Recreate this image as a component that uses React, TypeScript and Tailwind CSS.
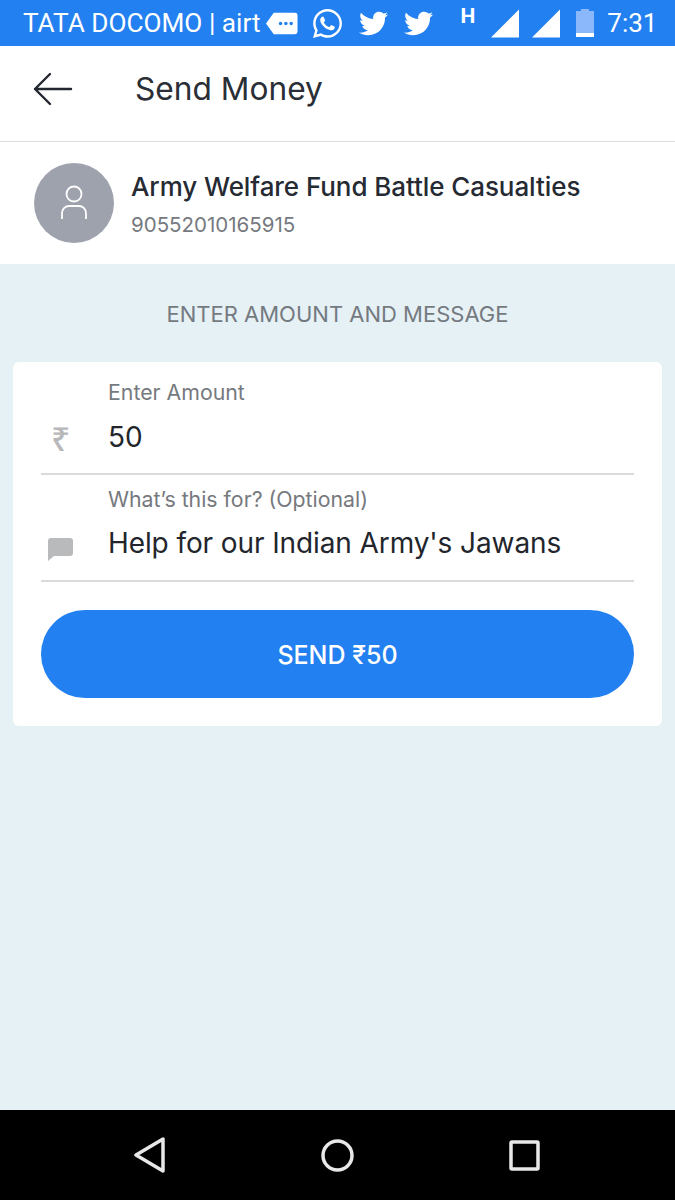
import { FaTwitter, FaWhatsapp } from "react-icons/fa";

const StatusBar = () => {
  return (
    <div className="h-[46px] bg-[#2380f1] flex items-center pl-[23px] text-white font-['Roboto',sans-serif] overflow-hidden">
      <span className="text-[26.200px] leading-none font-normal whitespace-nowrap">TATA DOCOMO | airt</span>
      {/* message bubble */}
      <svg className="ml-[6px] shrink-0" width="32" height="25" viewBox="0 0 33 24">
        <path d="M8 1h22a2.500 2.500 0 0 1 2.500 2.500v17a2.500 2.500 0 0 1-2.500 2.500H8L0 12z" fill="#fff" />
        <circle cx="15" cy="12" r="1.800" fill="#2380f1" />
        <circle cx="20.500" cy="12" r="1.800" fill="#2380f1" />
        <circle cx="26" cy="12" r="1.800" fill="#2380f1" />
      </svg>
      <FaWhatsapp className="ml-[13px] shrink-0" size={33} />
      <FaTwitter className="ml-[15px] shrink-0" size={29} />
      <FaTwitter className="ml-[16px] shrink-0" size={29} />
      <span className="ml-[27px] mb-[14px] text-[21px] leading-none font-bold">H</span>
      <svg className="ml-[16px] mt-[1px] shrink-0" width="28" height="29" viewBox="0 0 28 28">
        <path d="M28 0v28H0z" fill="#fff" />
      </svg>
      <svg className="ml-[13px] mt-[1px] shrink-0" width="28" height="29" viewBox="0 0 28 28">
        <path d="M28 0v28H0z" fill="#fff" />
      </svg>
      <svg className="ml-[16px] shrink-0" width="18" height="28" viewBox="0 0 18 28">
        <path d="M5 0h8v2h5v26H0V2h5z" fill="#8ab8fa" />
        <path d="M0 24h18v4H0z" fill="#fff" />
      </svg>
      <span className="ml-[13px] text-[26px] leading-none">7:31</span>
    </div>
  );
};

const NavBar = () => {
  return (
    <div className="h-[90px] bg-black flex items-center text-[#e8e8e8]">
      <div className="flex-1 flex justify-center">
        <svg className="ml-[-22px]" width="32" height="36" viewBox="0 0 32 36" fill="none" stroke="currentColor" strokeWidth="3.500" strokeLinejoin="round">
          <path d="M29 2v32L2 18z" />
        </svg>
      </div>
      <div className="flex justify-center">
        <svg width="33" height="33" viewBox="0 0 33 33" fill="none" stroke="currentColor" strokeWidth="3.500">
          <circle cx="16.500" cy="16.500" r="14.500" />
        </svg>
      </div>
      <div className="flex-1 flex justify-center">
        <svg className="ml-[20px]" width="31" height="31" viewBox="0 0 31 31" fill="none" stroke="currentColor" strokeWidth="3.500" strokeLinejoin="round">
          <rect x="2" y="2" width="27" height="27" rx="1" />
        </svg>
      </div>
    </div>
  );
};

const App = () => {
  return (
    <div className="w-[675px] h-[1200px] flex flex-col bg-[#e6f1f6] font-['Inter',sans-serif] overflow-hidden">
      <StatusBar />

      {/* header */}
      <div className="h-[96px] bg-white border-b border-[#dcdee1] flex items-center pl-[33px] shrink-0">
        <svg className="mb-[10px]" width="40" height="34" viewBox="0 0 40 34" fill="none" stroke="#23272f" strokeWidth="2.400" strokeLinecap="round" strokeLinejoin="round">
          <path d="M38 17H2M17 2 2 17l15 15" />
        </svg>
        <h1 className="ml-[62px] text-[31.700px] leading-none font-normal text-[#2a2e36] mb-[10px]">Send Money</h1>
      </div>

      {/* recipient */}
      <div className="h-[122px] bg-white flex items-center pl-[34px] shrink-0">
        <div className="w-[80px] h-[80px] rounded-full bg-[#9ea2ad] flex items-center justify-center">
          <svg width="28" height="36" viewBox="0 0 28 36" fill="none" stroke="#fff" strokeWidth="1.800">
            <circle cx="14" cy="9" r="7.500" />
            <path d="M2 34v-6a7 7 0 0 1 7-7h10a7 7 0 0 1 7 7v6" />
          </svg>
        </div>
        <div className="ml-[17px] pt-[3px]">
          <div className="text-[26px] leading-[30px] font-medium text-[#262a33] tracking-[-0.08px] whitespace-nowrap">Army Welfare Fund Battle Casualties</div>
          <div className="mt-[11px] text-[20.500px] leading-[24px] text-[#767a80]">90552010165915</div>
        </div>
      </div>

      <div className="flex-1 px-[13px]">
        <div className="h-[98px] flex items-center justify-center text-[22px] pt-[2px] text-[#747a80]">ENTER AMOUNT AND MESSAGE</div>

        {/* form card */}
        <div className="h-[364px] bg-white rounded-[6px] px-[28px] pt-[17px]">
          <div className="h-[96px] border-b-2 border-[#d9dadb] flex">
            <div className="w-[67px] flex items-end pb-[18px] pl-[10px]">
              <span className="text-[34px] leading-none text-[#b7b8ba] font-medium font-['Noto_Sans',sans-serif]">₹</span>
            </div>
            <div>
              <div className="text-[21.300px] leading-[26px] text-[#76797e]">Enter Amount</div>
              <div className="mt-[15px] text-[28px] leading-[34px] text-[#22262c]">50</div>
            </div>
          </div>
          <div className="h-[107px] border-b-2 border-[#d9dadb] flex pt-[11px]">
            <div className="w-[67px] flex items-end pb-[19px] pl-[7px]">
              <svg width="25" height="23" viewBox="0 0 25 23">
                <path d="M3 0h19a3 3 0 0 1 3 3v12a3 3 0 0 1-3 3H6l-6 5V3a3 3 0 0 1 3-3z" fill="#b9babc" />
              </svg>
            </div>
            <div>
              <div className="text-[21.300px] leading-[26px] text-[#76797e] whitespace-nowrap">What’s this for? (Optional)</div>
              <div className="mt-[14px] text-[28px] leading-[34px] tracking-[-0.1px] text-[#22262c] whitespace-nowrap">Help for our Indian Army's Jawans</div>
            </div>
          </div>
          <button className="mt-[28px] w-full h-[88px] pt-[4px] rounded-full bg-[#2380f1] text-white text-[25px] font-medium flex items-center justify-center">SEND ₹50</button>
        </div>
      </div>

      <NavBar />
    </div>
  );
};

export default App;
